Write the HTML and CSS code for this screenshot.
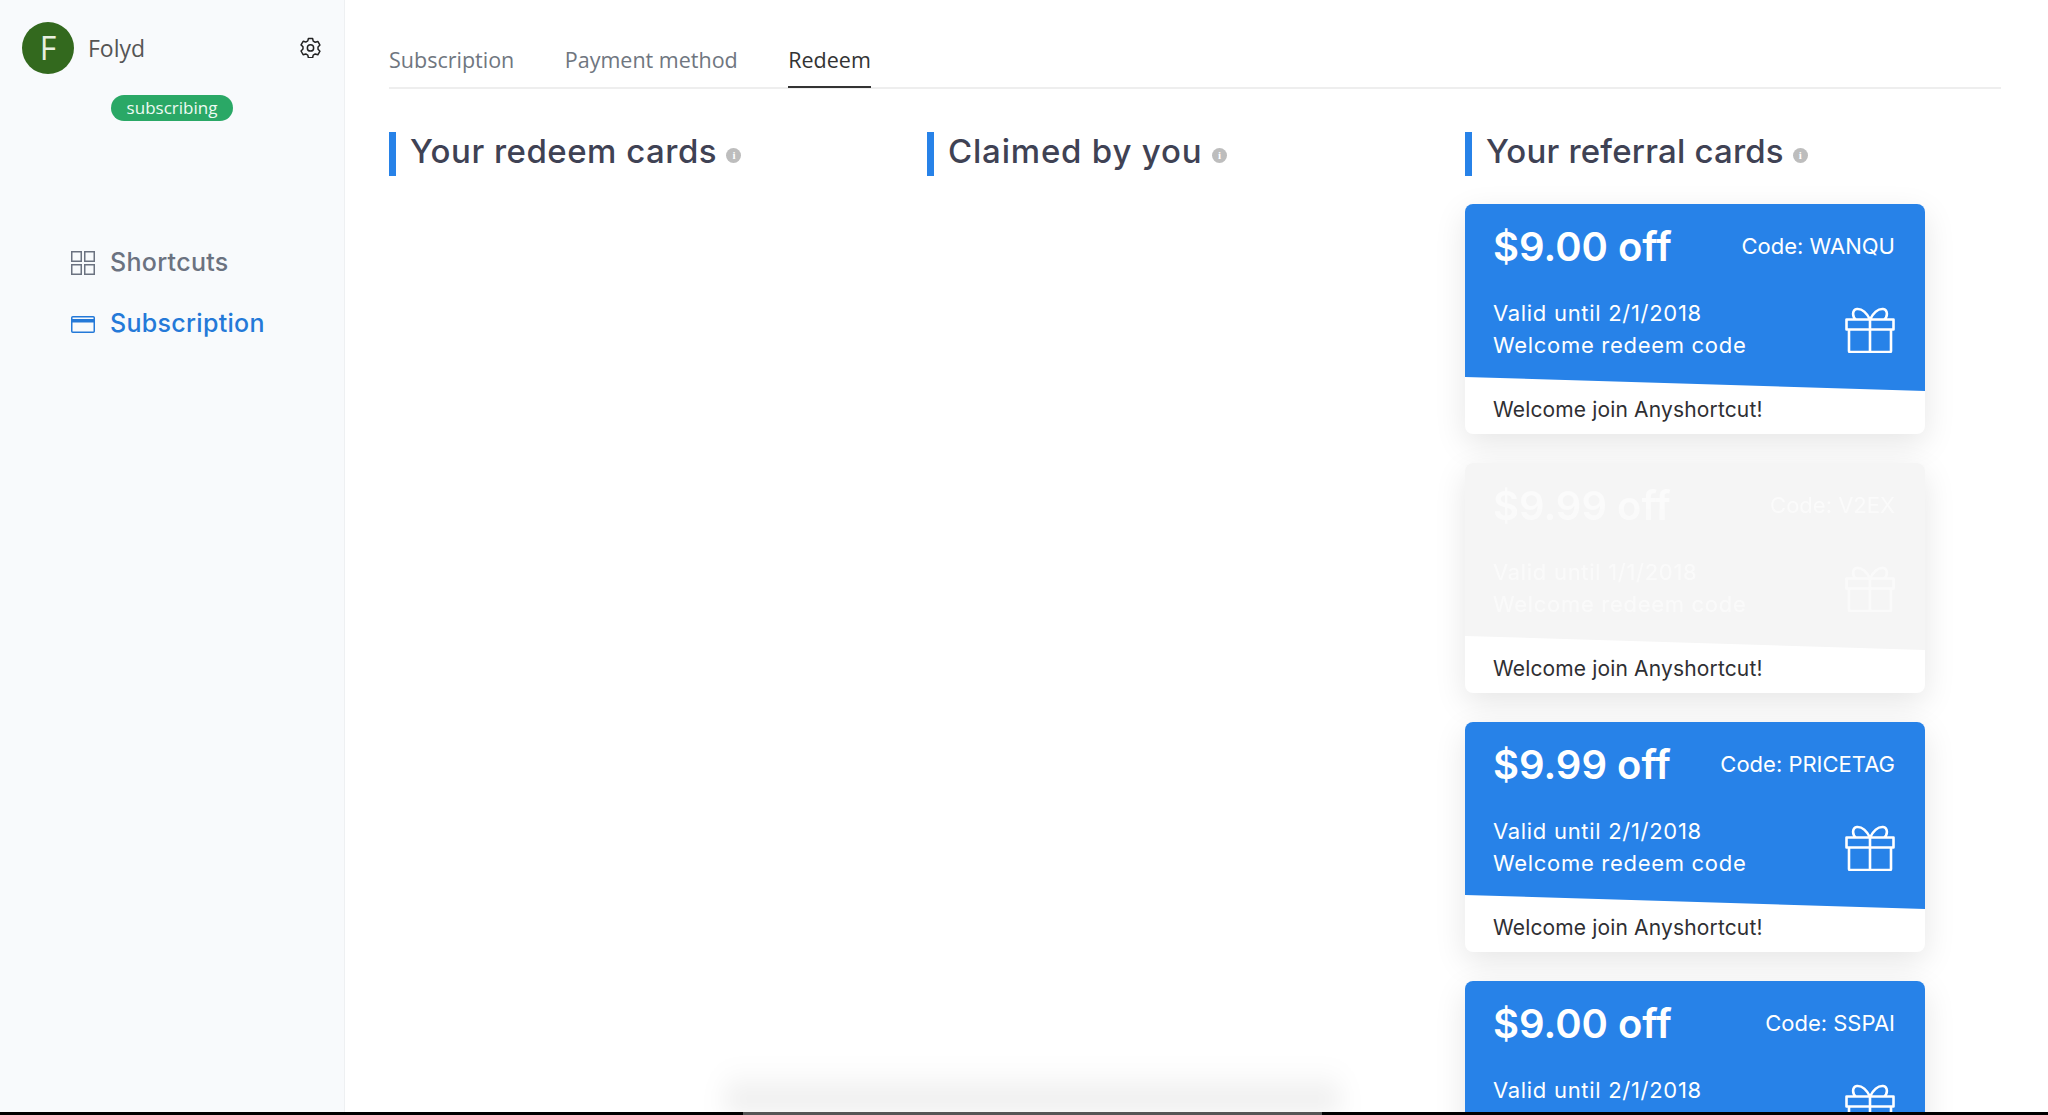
FILE: index.html
```html
<!DOCTYPE html>
<html lang="en">
<head>
<meta charset="utf-8">
<title>Anyshortcut - Redeem</title>
<link rel="stylesheet" href="styles.css">
</head>
<body>
<div class="app">
  <aside class="sidebar">
    <div class="user">
      <div class="avatar">F</div>
      <span class="name">Folyd</span>
      <svg class="gear" viewBox="0 0 24 24" fill="none" stroke="#222" stroke-width="1.7" stroke-linejoin="round"><path d="M9.6 2h4.8l.7 3 2.3 1.3 3-.9 2.4 4.1-2.2 2.2v2.6l2.2 2.2-2.4 4.1-3-.9-2.3 1.3-.7 3H9.6l-.7-3-2.3-1.3-3 .9L1.200 16.300l2.200-2.200V11.500L1.200 9.300l2.400-4.100 3 .9 2.300-1.300z" transform="translate(0 -.3)"/><circle cx="12" cy="12.500" r="3.600"/></svg>
    </div>
    <div class="badge-row"><span class="badge">subscribing</span></div>
    <nav class="nav">
      <a class="nav-item">
        <svg class="nav-icon" viewBox="0 0 24 24" fill="none" stroke="#6b7280" stroke-width="1.500"><rect x=".75" y=".75" width="9.500" height="9.500"/><rect x="13.750" y=".75" width="9.500" height="9.500"/><rect x=".75" y="13.750" width="9.500" height="9.500"/><rect x="13.750" y="13.750" width="9.500" height="9.500"/></svg>
        <span>Shortcuts</span>
      </a>
      <a class="nav-item active">
        <svg class="nav-icon" viewBox="0 0 24 24" fill="none" stroke="#2479d8" stroke-width="1.500"><rect x=".75" y="4.750" width="22.500" height="15.500" rx="1"/><rect x="1" y="7" width="22" height="3.500" fill="#2479d8" stroke="none"/></svg>
        <span>Subscription</span>
      </a>
    </nav>
  </aside>
  <main class="main">
    <div class="tabs">
      <a class="tab">Subscription</a>
      <a class="tab">Payment method</a>
      <a class="tab current">Redeem</a>
    </div>
    <div class="columns">
      <section>
        <h2 class="title">Your redeem cards <span class="info">i</span></h2>
      </section>
      <section>
        <h2 class="title title-wide">Claimed by you <span class="info">i</span></h2>
      </section>
      <section>
        <h2 class="title title-tight">Your referral cards <span class="info">i</span></h2>
        <div class="cards">
          <article class="card">
            <div class="card-head">
              <div class="row-top"><span class="price">$9.00 off</span><span class="code">Code: WANQU</span></div>
              <div class="row-bottom">
                <div class="meta">Valid until 2/1/2018<br>Welcome redeem code</div>
                <svg class="gift" viewBox="0 0 50 46" fill="none" stroke="#fff" stroke-width="2.600" stroke-linejoin="round"><path d="M1.500 12.500h47v10h-47zM4 22.500h42v21.500a1 1 0 0 1-1 1H5a1 1 0 0 1-1-1zM25 12.500v32.500M25 12.500c-3-6-8-11-13-10.500-5 .5-5 8-1 10.500M25 12.500c3-6 8-11 13-10.500 5 .5 5 8 1 10.500"/></svg>
              </div>
            </div>
            <div class="card-foot">Welcome join Anyshortcut!</div>
          </article>
          <article class="card used">
            <div class="card-head">
              <div class="row-top"><span class="price">$9.99 off</span><span class="code">Code: V2EX</span></div>
              <div class="row-bottom">
                <div class="meta">Valid until 1/1/2018<br>Welcome redeem code</div>
                <svg class="gift" viewBox="0 0 50 46" fill="none" stroke="#fff" stroke-width="2.600" stroke-linejoin="round"><path d="M1.500 12.500h47v10h-47zM4 22.500h42v21.500a1 1 0 0 1-1 1H5a1 1 0 0 1-1-1zM25 12.500v32.500M25 12.500c-3-6-8-11-13-10.500-5 .5-5 8-1 10.500M25 12.500c3-6 8-11 13-10.500 5 .5 5 8 1 10.500"/></svg>
              </div>
            </div>
            <div class="card-foot">Welcome join Anyshortcut!</div>
          </article>
          <article class="card">
            <div class="card-head">
              <div class="row-top"><span class="price">$9.99 off</span><span class="code">Code: PRICETAG</span></div>
              <div class="row-bottom">
                <div class="meta">Valid until 2/1/2018<br>Welcome redeem code</div>
                <svg class="gift" viewBox="0 0 50 46" fill="none" stroke="#fff" stroke-width="2.600" stroke-linejoin="round"><path d="M1.500 12.500h47v10h-47zM4 22.500h42v21.500a1 1 0 0 1-1 1H5a1 1 0 0 1-1-1zM25 12.500v32.500M25 12.500c-3-6-8-11-13-10.500-5 .5-5 8-1 10.500M25 12.500c3-6 8-11 13-10.500 5 .5 5 8 1 10.500"/></svg>
              </div>
            </div>
            <div class="card-foot">Welcome join Anyshortcut!</div>
          </article>
          <article class="card">
            <div class="card-head">
              <div class="row-top"><span class="price">$9.00 off</span><span class="code">Code: SSPAI</span></div>
              <div class="row-bottom">
                <div class="meta">Valid until 2/1/2018<br>Welcome redeem code</div>
                <svg class="gift" viewBox="0 0 50 46" fill="none" stroke="#fff" stroke-width="2.600" stroke-linejoin="round"><path d="M1.500 12.500h47v10h-47zM4 22.500h42v21.500a1 1 0 0 1-1 1H5a1 1 0 0 1-1-1zM25 12.500v32.500M25 12.500c-3-6-8-11-13-10.500-5 .5-5 8-1 10.500M25 12.500c3-6 8-11 13-10.500 5 .5 5 8 1 10.500"/></svg>
              </div>
            </div>
            <div class="card-foot">Welcome join Anyshortcut!</div>
          </article>
        </div>
      </section>
    </div>
  </main>
</div>
<div class="window-glow"></div>
<div class="window-edge"><span class="window-tab"></span></div>
</body>
</html>
```
FILE: styles.css
```css
* { box-sizing: border-box; }
html, body { margin: 0; height: 100%; overflow: hidden; background: #fff; }
body { position: relative; font-family: "Open Sans", sans-serif; color: #333; }
.app { display: flex; height: 1115px; overflow: hidden; }

.sidebar { width: 345px; flex: none; padding-top: 22px; background: #f8fafc; border-right: 1px solid #eef0f2; }
.user { display: flex; align-items: center; height: 52px; padding: 0 23px 0 22px; }
.avatar { width: 52px; height: 52px; border-radius: 50%; background: #33691e; color: #e8f0e0; font-size: 32px; line-height: 52px; text-align: center; }
.name { margin-left: 14px; font-size: 23px; line-height: 50px; color: #555; flex: 1; }
.gear { width: 21px; height: 21px; margin-top: -2px; }
.badge-row { margin-top: 21px; padding-left: 111px; }
.badge { display: block; width: 122px; height: 26px; line-height: 25px; border-radius: 13px; background: #2aa866; color: #eefbf3; font-size: 17px; text-align: center; }
.nav { margin-top: 121px; padding-left: 71px; display: flex; flex-direction: column; gap: 21px; }
.nav-item { display: flex; align-items: center; gap: 15px; height: 40px; font-family: Inter, sans-serif; font-weight: 500; font-size: 25px; letter-spacing: .3px; color: #6b7280; }
.nav-item.active { color: #2479d8; }
.nav-icon { width: 24px; height: 24px; margin-top: 2px; }

.main { flex: 1; min-width: 0; padding: 0 47px 0 44px; }
.tabs { display: flex; gap: 50.500px; height: 89px; padding-top: 43px; border-bottom: 2px solid #eeeeee; }
.tab { height: 45px; font-size: 21.500px; line-height: 34px; color: #6f7680; }
.tab.current { color: #333; border-bottom: 2px solid #333; }

.columns { display: grid; grid-template-columns: repeat(3, 1fr); margin: 43px -2px 0 0; }
.title { margin: 0; height: 44px; border-left: 7px solid #2782e8; padding-left: 14px; font-family: Inter, sans-serif; font-weight: 500; font-size: 33px; letter-spacing: .5px; line-height: 38px; color: #3f4254; white-space: nowrap; }
.title-wide { letter-spacing: .8px; }
.title-tight { letter-spacing: .2px; }
.info { display: inline-block; width: 15px; height: 15px; border-radius: 50%; background: #bdbdbd; color: #fff; font-size: 11px; font-weight: 800; letter-spacing: 0; line-height: 15px; text-align: center; vertical-align: 4px; font-family: "Liberation Serif", serif; }

.cards { margin-top: 28px; display: flex; flex-direction: column; gap: 29px; width: 460px; }
.card { height: 230px; border-radius: 8px; background: #fff; overflow: hidden; box-shadow: 0 10px 32px rgba(0,0,0,.1); display: flex; flex-direction: column; }
.card-head { height: 187px; flex: none; padding: 17px 30px 0 28px; background: #2782e8; color: #fff; clip-path: polygon(0 0, 100% 0, 100% 100%, 0 173px); }
.used .card-head { background: #f5f5f5; }
.used .price, .used .code, .used .meta, .used .gift { opacity: .55; }
.row-top { display: flex; justify-content: space-between; align-items: center; height: 50px; }
.price { font-family: Inter, sans-serif; font-weight: 600; font-size: 40px; }
.code { font-family: Inter, sans-serif; font-size: 22px; }
.row-bottom { display: flex; justify-content: space-between; align-items: center; margin-top: 27px; }
.meta { font-family: Inter, sans-serif; font-size: 22px; letter-spacing: .7px; line-height: 31.500px; }
.gift { width: 50px; height: 46px; }
.card-foot { padding-left: 28px; font-family: Inter, sans-serif; font-size: 21px; letter-spacing: .15px; line-height: 32px; color: #2f2f33; margin-top: 3px; }

.window-glow { position: absolute; left: 725px; bottom: 3px; width: 615px; height: 45px; background: linear-gradient(to bottom, rgba(0,0,0,0), rgba(0,0,0,.09)); filter: blur(12px); }
.window-edge { position: absolute; left: 0; right: 0; bottom: 0; height: 3px; background: #000; }
.window-tab { position: absolute; left: 743px; width: 579px; top: 0; height: 3px; background: #555; }
```
